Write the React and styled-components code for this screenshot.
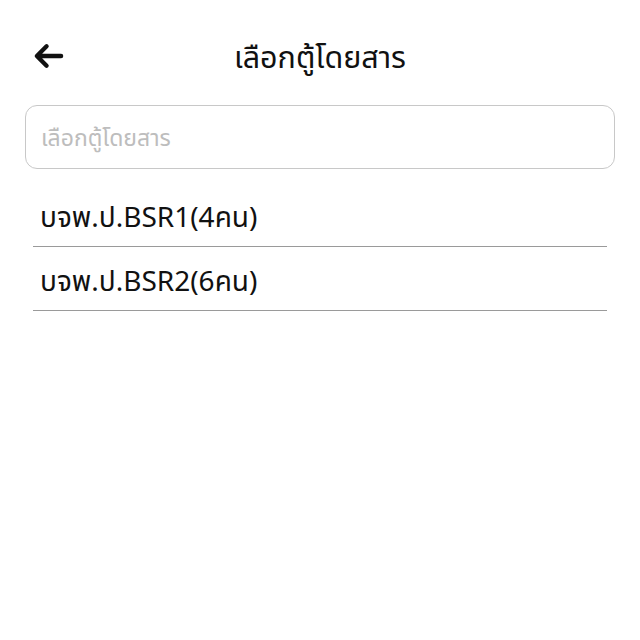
import React from "react";
import styled, { createGlobalStyle } from "styled-components";

const GlobalStyle = createGlobalStyle`
  body {
    margin: 0;
    background: #fff;
    font-family: "Noto Sans", "Noto Sans Thai", "Open Sans", sans-serif;
    color: #111;
  }
`;

const Page = styled.div`
  width: 640px;
  height: 640px;
  background: #fff;
`;

const Header = styled.div`
  display: grid;
  grid-template-columns: 64px 1fr 64px;
  align-items: center;
  height: 58px;
  padding: 27px 0 0 0;
  h1 {
    margin: 0;
    text-align: center;
    font-size: 30.5px;
    font-weight: 400;
    line-height: 58px;
  }
`;

const BackButton = styled.button`
  border: none;
  background: none;
  padding: 0 0 0 33px;
  display: flex;
  align-items: center;
  cursor: pointer;
`;

const SearchBox = styled.input`
  display: block;
  box-sizing: border-box;
  margin: 20px 25px 0 25px;
  width: 590px;
  height: 64px;
  border: 1px solid #c8c8c8;
  border-radius: 12px;
  padding: 0 15px;
  font-family: inherit;
  font-size: 23px;
  outline: none;
  &::placeholder {
    color: #bdbdbd;
  }
`;

const List = styled.div`
  margin: 14px 33px 0 33px;
`;

const Row = styled.div`
  height: 64px;
  border-bottom: 1.5px solid #9a9a9a;
  display: flex;
  align-items: center;
  padding-left: 7px;
  font-size: 28px;
  padding-top: 7px;
  box-sizing: border-box;
`;

const carriages = ["บจพ.ป.BSR1(4คน)", "บจพ.ป.BSR2(6คน)"];

function App() {
  return (
    <Page>
      <GlobalStyle />
      <Header>
        <BackButton>
          <svg width="32" height="28" viewBox="0 0 32 28" fill="none">
            <path
              d="M29 14H5M14 4L4 14l10 10"
              stroke="#111"
              strokeWidth="4.5"
              strokeLinecap="round"
              strokeLinejoin="round"
            />
          </svg>
        </BackButton>
        <h1>เลือกตู้โดยสาร</h1>
        <div />
      </Header>
      <SearchBox placeholder="เลือกตู้โดยสาร" />
      <List>
        {carriages.map((c) => (
          <Row key={c}>{c}</Row>
        ))}
      </List>
    </Page>
  );
}

export default App;
